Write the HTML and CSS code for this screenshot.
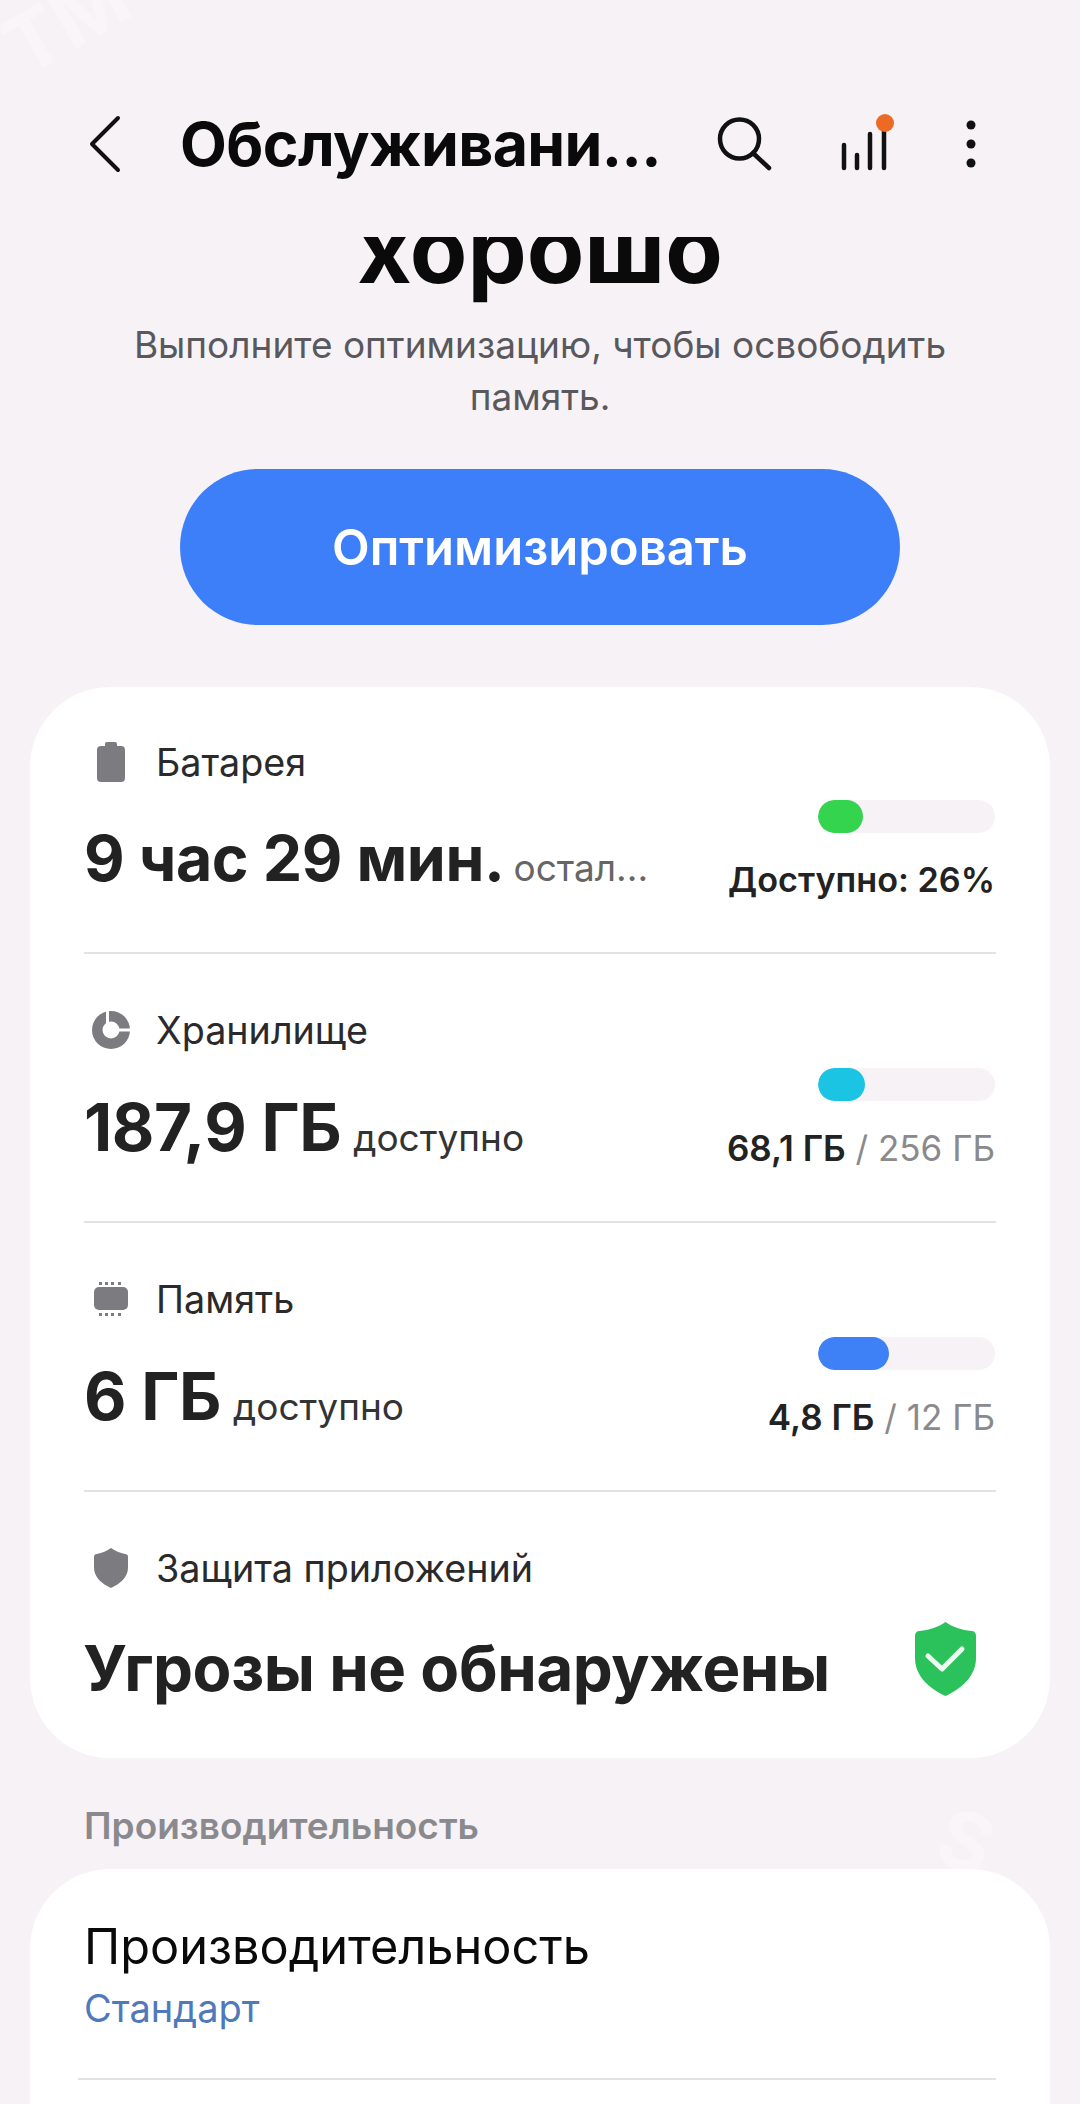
FILE: index.html
```html
<!DOCTYPE html>
<html lang="ru">
<head>
<meta charset="utf-8">
<title>Обслуживание</title>
<link rel="stylesheet" href="styles.css">
</head>
<body>
<div class="page">
  <section class="hero">
    <div class="hero-title">хорошо</div>
    <p class="hero-sub">Выполните оптимизацию, чтобы освободить<br>память.</p>
    <div class="opt-btn">Оптимизировать</div>
  </section>

  <header class="appbar">
    <svg class="back" viewBox="0 0 36 60"><path d="M32 4 6 30l26 26" fill="none" stroke="#111" stroke-width="4" stroke-linecap="round" stroke-linejoin="round"/></svg>
    <div class="appbar-title">Обслуживани...</div>
    <svg class="ic-search" viewBox="0 0 56 56"><circle cx="23.500" cy="23" r="19.500" fill="none" stroke="#111" stroke-width="4.500"/><path d="M37 37 53 52" stroke="#111" stroke-width="4.500" stroke-linecap="round"/></svg>
    <svg class="ic-stats" viewBox="0 0 56 60"><g stroke="#111" stroke-width="4.500" stroke-linecap="round"><path d="M4 32v23"/><path d="M17 42v13"/><path d="M30 21v34"/><path d="M44 17v38"/></g><circle cx="45" cy="10" r="9" fill="#ec6a24"/></svg>
    <svg class="ic-more" viewBox="0 0 12 48"><circle cx="6" cy="5" r="4.500" fill="#111"/><circle cx="6" cy="24" r="4.500" fill="#111"/><circle cx="6" cy="43" r="4.500" fill="#111"/></svg>
  </header>

  <div class="wm wm-top">TM</div>
  <div class="wm wm-bot">S</div>

  <section class="card main-card">
    <div class="row row-first">
      <div class="row-head">
        <svg class="row-ic" viewBox="0 0 40 40"><path d="M16 0h8a2 2 0 0 1 2 2v2h4a4 4 0 0 1 4 4v28a4 4 0 0 1-4 4H10a4 4 0 0 1-4-4V8a4 4 0 0 1 4-4h4V2a2 2 0 0 1 2-2z" fill="#7b7b80"/></svg>
        <span class="row-label">Батарея</span>
      </div>
      <div class="row-body">
        <div class="value-line"><span class="value">9 час 29 мин.</span><span class="unit fade">остал...</span></div>
        <div class="usage">
          <div class="track"><div class="fill fill-green"></div></div>
          <div class="usage-text usage-text-tight"><b>Доступно: 26%</b></div>
        </div>
      </div>
    </div>
    <div class="row">
      <div class="row-head">
        <svg class="row-ic" viewBox="0 0 40 40"><circle cx="20" cy="20" r="19" fill="#7b7b80"/><circle cx="20" cy="20" r="8.500" fill="#fff"/><path d="M16.500 0v14M20 20h20" stroke="#fff" stroke-width="3" fill="none"/></svg>
        <span class="row-label">Хранилище</span>
      </div>
      <div class="row-body">
        <div class="value-line value-line-lg"><span class="value value-lg">187,9 ГБ</span><span class="unit">доступно</span></div>
        <div class="usage">
          <div class="track"><div class="fill fill-cyan"></div></div>
          <div class="usage-text"><b>68,1 ГБ</b> <span class="of">/ 256 ГБ</span></div>
        </div>
      </div>
    </div>
    <div class="row">
      <div class="row-head">
        <svg class="row-ic" viewBox="0 0 40 40"><rect x="3" y="8" width="34" height="23" rx="5" fill="#7b7b80"/><g fill="#7b7b80"><rect x="8" y="3" width="3" height="3"/><rect x="14" y="3" width="3" height="3"/><rect x="20" y="3" width="3" height="3"/><rect x="27" y="3" width="3" height="3"/><rect x="8" y="34" width="3" height="3"/><rect x="14" y="34" width="3" height="3"/><rect x="20" y="34" width="3" height="3"/><rect x="27" y="34" width="3" height="3"/></g></svg>
        <span class="row-label">Память</span>
      </div>
      <div class="row-body">
        <div class="value-line value-line-lg"><span class="value value-lg">6 ГБ</span><span class="unit">доступно</span></div>
        <div class="usage">
          <div class="track"><div class="fill fill-blue"></div></div>
          <div class="usage-text"><b>4,8 ГБ</b> <span class="of">/ 12 ГБ</span></div>
        </div>
      </div>
    </div>
    <div class="row row-last">
      <div class="row-head">
        <svg class="row-ic" viewBox="0 0 40 40"><path d="M20 0c4 3 9 5 14 6 2 0 3 1 3 3v11c0 9-8 16-17 20C11 36 3 29 3 20V9c0-2 1-3 3-3 5-1 10-3 14-6z" fill="#7b7b80"/></svg>
        <span class="row-label">Защита приложений</span>
      </div>
      <div class="row-body row-body-safe">
        <span class="value value-safe">Угрозы не обнаружены</span>
        <svg class="safe" viewBox="0 0 61 74"><path d="M30.500 0c7 5 16 8 26 9 3 0 4.500 2 4.500 5v22c0 17-13 30-30.500 38C13 66 0 53 0 36V14c0-3 1.500-5 4.500-5 10-1 19-4 26-9z" fill="#2bc25c"/><path d="M13 34l14 13 20-20" fill="none" stroke="#eefaf1" stroke-width="5" stroke-linecap="round" stroke-linejoin="round"/></svg>
      </div>
    </div>
  </section>

  <h2 class="section-label">Производительность</h2>

  <section class="card perf-card">
    <div class="perf-title">Производительность</div>
    <div class="perf-sub">Стандарт</div>
    <div class="perf-rule"></div>
  </section>
</div>
</body>
</html>
```

FILE: styles.css
```css
* { box-sizing: border-box; }
html, body { margin: 0; padding: 0; }
body { background: #f7f2f6; font-family: Inter, "Noto Sans", "Liberation Sans", sans-serif; color: #222; }
.page { position: relative; width: 1080px; height: 2104px; overflow: hidden; background: #f7f2f6; }

.wm { position: absolute; color: #fff; font-weight: 700; opacity: .3; }
.wm-top { left: 2px; top: -28px; font-size: 80px; transform: rotate(-30deg); }
.wm-bot { left: 940px; top: 1792px; font-size: 80px; transform: rotate(20deg); }

.appbar { position: absolute; left: 0; top: 0; width: 1080px; height: 237px; padding-bottom: 63px; background: #f7f2f6; display: flex; align-items: flex-end; }
.back { width: 36px; height: 60px; margin-left: 86px; flex: none; }
.appbar-title { width: 480px; margin-left: 58px; margin-right: 56px; font-size: 60.800px; line-height: 60px; font-weight: 700; color: #0a0a0a; white-space: nowrap; letter-spacing: -.6px; }
.ic-search { width: 56px; height: 56px; flex: none; margin-right: 68px; margin-bottom: 2px; }
.ic-stats { width: 56px; height: 60px; flex: none; margin-right: 69px; margin-bottom: 1px; }
.ic-more { width: 12px; height: 48px; flex: none; margin-bottom: 6px; }

.hero { padding-top: 203px; display: flex; flex-direction: column; align-items: center; }
.hero-title { font-size: 94px; line-height: 92px; font-weight: 700; color: #0a0a0a; }
.hero-sub { margin: 24px 0 0; font-size: 37px; line-height: 52px; color: #58585d; text-align: center; }
.opt-btn { margin-top: 46px; width: 720px; height: 156px; border-radius: 78px; background: #3d7ff8; color: #fff; font-size: 49px; font-weight: 600; display: flex; align-items: center; justify-content: center; }

.card { background: #fff; border-radius: 80px; margin: 0 30px; }
.main-card { margin-top: 62px; height: 1071px; padding: 0 54px; }
.row { height: 269px; border-bottom: 2px solid #e3e2e3; padding-top: 56px; }
.row-first { height: 267px; padding-top: 55px; }
.row-last { border-bottom: 0; height: 264px; }
.row-head { display: flex; align-items: center; height: 40px; }
.row-ic { width: 40px; height: 40px; flex: none; margin-left: 7px; }
.row-label { margin-left: 25px; font-size: 37.700px; line-height: 40px; color: #2a2a2c; }
.row-body { display: flex; justify-content: space-between; margin-top: 12px; }
.value-line { display: flex; align-items: baseline; margin-top: 26px; }
.value-line-lg { margin-top: 28px; }
.value { font-size: 62.600px; line-height: 76px; font-weight: 700; color: #222; letter-spacing: -.4px; white-space: nowrap; }
.value-lg { font-size: 65.500px; }
.value-safe { font-size: 63.500px; margin-top: 8px; margin-left: -1px; }
.unit { font-size: 37px; margin-left: 12px; color: #333; }
.fade { color: #666; margin-left: 9px; }
.usage { display: flex; flex-direction: column; align-items: flex-end; width: 300px; margin-right: 1px; margin-top: 6px; }
.track { width: 177px; height: 33px; border-radius: 17px; background: #f7f2f6; overflow: hidden; }
.fill { height: 100%; border-radius: 17px; }
.fill-green { width: 45px; background: #35d44f; }
.fill-cyan { width: 47px; background: #1cc4e4; }
.fill-blue { width: 71px; background: #3e80f6; }
.usage-text { margin-top: 24px; font-size: 35px; line-height: 46px; white-space: nowrap; color: #222; }
.usage-text-tight { font-size: 34.200px; }
.usage-text b { font-weight: 600; }
.of { color: #8a8a8c; }
.row-body-safe { align-items: flex-start; margin-top: 34px; padding-right: 20px; }
.safe { width: 61px; height: 74px; flex: none; }

.section-label { margin: 46px 0 0 84px; font-size: 37px; line-height: 44px; font-weight: 600; color: #8a8a8e; }
.perf-card { margin-top: 21px; height: 340px; padding: 50px 54px 0; }
.perf-title { font-size: 48.700px; line-height: 56px; color: #0a0a0a; }
.perf-sub { margin-top: 11px; font-size: 38px; line-height: 44px; color: #4f79bc; }
.perf-rule { margin: 48px 0 0 -6px; height: 2px; background: #e3e2e3; }
```
